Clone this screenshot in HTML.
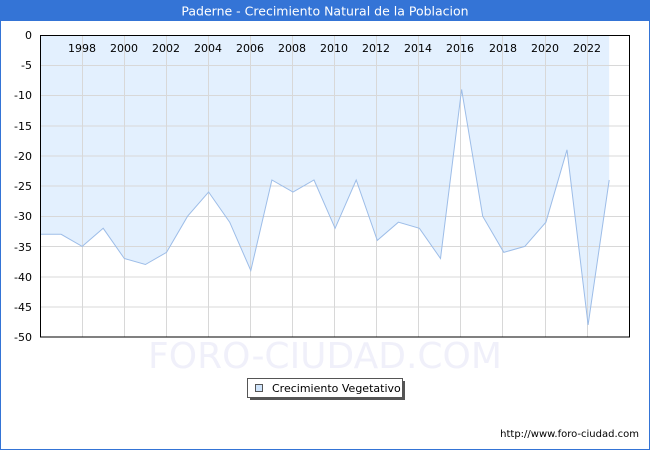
<!DOCTYPE html><html><head><style>body{margin:0;width:650px;height:450px;overflow:hidden;background:#fff;font-family:"DejaVu Sans","Liberation Sans",sans-serif}</style></head><body>
<svg width="650" height="450" viewBox="0 0 650 450" xmlns="http://www.w3.org/2000/svg" style="display:block">
<rect x="0.5" y="0.5" width="649" height="449" fill="#fff" stroke="#3474d6"/>
<rect x="0" y="0" width="650" height="21" fill="#3474d6"/>
<text x="325" y="15.5" text-anchor="middle" font-size="12.5" fill="#fff">Paderne - Crecimiento Natural de la Poblacion</text>
<text x="325" y="368" text-anchor="middle" font-size="36" fill="#f0f0fa" font-family="DejaVu Sans">FORO-CIUDAD.COM</text>
<polygon fill="#e3f0fe" points="40,35 40,234.3 61.1,234.3 82.2,246.4 103.2,228.3 124.3,258.5 145.4,264.5 166.5,252.4 187.6,216.2 208.6,192 229.7,222.2 250.8,270.6 271.9,180 293,192 314,180 335.1,228.3 356.2,180 377.3,240.4 398.4,222.2 419.4,228.3 440.5,258.5 461.6,89.4 482.7,216.2 503.8,252.4 524.8,246.4 545.9,222.2 567,149.8 588.1,324.9 609.2,180 609.2,35"/>
<g stroke="#d8d8d8" stroke-width="1">
<line x1="40" x2="630" y1="65.5" y2="65.5"/><line x1="40" x2="630" y1="95.5" y2="95.5"/><line x1="40" x2="630" y1="126" y2="126"/><line x1="40" x2="630" y1="156" y2="156"/><line x1="40" x2="630" y1="186" y2="186"/><line x1="40" x2="630" y1="216.5" y2="216.5"/><line x1="40" x2="630" y1="246.5" y2="246.5"/><line x1="40" x2="630" y1="277" y2="277"/><line x1="40" x2="630" y1="307" y2="307"/>
<line x1="82.5" x2="82.5" y1="35" y2="337"/><line x1="124.5" x2="124.5" y1="35" y2="337"/><line x1="166.5" x2="166.5" y1="35" y2="337"/><line x1="208.5" x2="208.5" y1="35" y2="337"/><line x1="250.5" x2="250.5" y1="35" y2="337"/><line x1="292.5" x2="292.5" y1="35" y2="337"/><line x1="334.5" x2="334.5" y1="35" y2="337"/><line x1="376.5" x2="376.5" y1="35" y2="337"/><line x1="418.5" x2="418.5" y1="35" y2="337"/><line x1="460.5" x2="460.5" y1="35" y2="337"/><line x1="502.5" x2="502.5" y1="35" y2="337"/><line x1="545.5" x2="545.5" y1="35" y2="337"/><line x1="587.5" x2="587.5" y1="35" y2="337"/>
</g>
<polyline fill="none" stroke="#9dbde8" stroke-width="1" points="40,234.3 61.1,234.3 82.2,246.4 103.2,228.3 124.3,258.5 145.4,264.5 166.5,252.4 187.6,216.2 208.6,192 229.7,222.2 250.8,270.6 271.9,180 293,192 314,180 335.1,228.3 356.2,180 377.3,240.4 398.4,222.2 419.4,228.3 440.5,258.5 461.6,89.4 482.7,216.2 503.8,252.4 524.8,246.4 545.9,222.2 567,149.8 588.1,324.9 609.2,180"/>
<rect x="40.5" y="35.5" width="589" height="301.5" fill="none" stroke="#000"/>
<g font-size="11" fill="#000" text-anchor="middle">
<text x="82" y="52">1998</text><text x="124" y="52">2000</text><text x="166" y="52">2002</text><text x="208" y="52">2004</text><text x="250" y="52">2006</text><text x="292" y="52">2008</text><text x="334" y="52">2010</text><text x="376" y="52">2012</text><text x="418" y="52">2014</text><text x="460" y="52">2016</text><text x="503" y="52">2018</text><text x="545" y="52">2020</text><text x="587" y="52">2022</text>
</g>
<g font-size="11" fill="#000" text-anchor="end">
<text x="32" y="39">0</text><text x="32" y="69">-5</text><text x="32" y="99">-10</text><text x="32" y="130">-15</text><text x="32" y="160">-20</text><text x="32" y="190">-25</text><text x="32" y="220">-30</text><text x="32" y="251">-35</text><text x="32" y="281">-40</text><text x="32" y="311">-45</text><text x="32" y="341">-50</text>
</g>
<rect x="250" y="381" width="155" height="19" fill="#555"/>
<rect x="247.5" y="378.5" width="155" height="19" fill="#fff" stroke="#555"/>
<rect x="255.5" y="384.5" width="7" height="7" fill="#cfe4fb" stroke="#555"/>
<text x="272" y="392" font-size="11" fill="#000">Crecimiento Vegetativo</text>
<text x="639" y="437" text-anchor="end" font-size="10" fill="#000">http://www.foro-ciudad.com</text>
</svg>
</body></html>
